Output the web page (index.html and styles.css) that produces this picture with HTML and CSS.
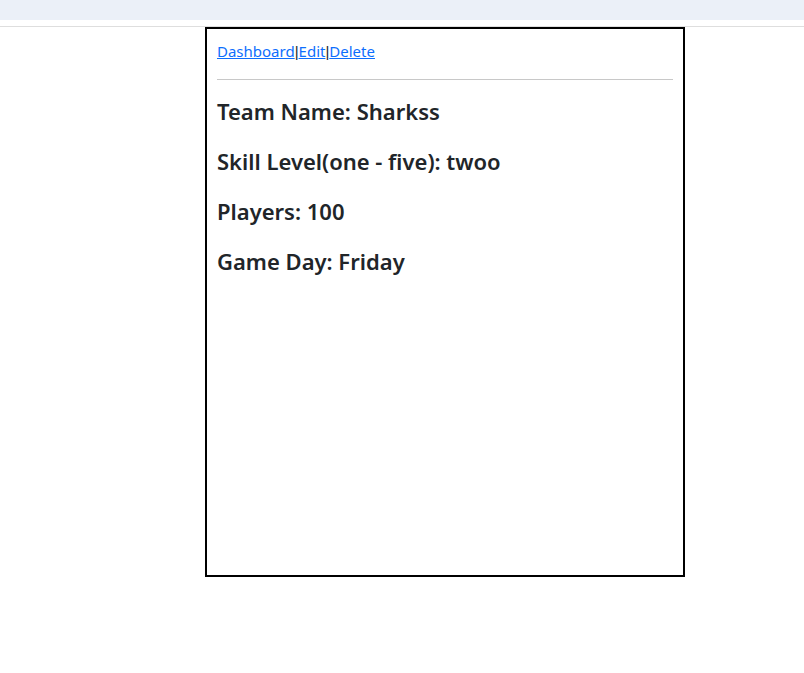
FILE: index.html
```html
<!DOCTYPE html>
<html>
<head>
<meta charset="utf-8">
<link rel="stylesheet" href="styles.css">
</head>
<body>
<div class="topbar"></div>
<div class="divider"></div>
<main class="card">
  <nav class="links"><a href="#">Dashboard</a><span class="sep">|</span><a href="#">Edit</a><span class="sep">|</span><a href="#">Delete</a></nav>
  <hr class="rule">
  <h4 class="info">Team Name: Sharkss</h4>
  <h4 class="info">Skill Level(one - five): twoo</h4>
  <h4 class="info">Players: 100</h4>
  <h4 class="info">Game Day: Friday</h4>
</main>
</body>
</html>
```
FILE: styles.css
```css
html, body {
  margin: 0;
  padding: 0;
  background: #fff;
}
body {
  font-family: "Noto Sans", "Open Sans", sans-serif;
  color: #212529;
  font-size: 16px;
  line-height: 1.5;
}
.topbar {
  height: 20px;
  background: #ebf0f8;
}
.divider {
  height: 6px;
  border-bottom: 1px solid #dedede;
}
.card {
  box-sizing: border-box;
  width: 480px;
  height: 550px;
  margin-left: 205px;
  border: 2px solid #000;
  padding: 10px;
}
.links {
  height: 24px;
  font-size: 15px;
  line-height: 24px;
  color: #212529;
}
.links a {
  color: #0d6efd;
  text-decoration: underline;
}
.sep {
  font-family: "Liberation Sans", sans-serif;
  font-size: 15px;
  line-height: 24px;
}
.rule {
  margin: 16px 0;
  border: 0;
  border-top: 1px solid #c8c8c8;
  height: 0;
}
.info {
  margin: 0 0 21px 0;
  padding-top: 1px;
  font-size: 22px;
  font-weight: 600;
  line-height: 28px;
}
```
